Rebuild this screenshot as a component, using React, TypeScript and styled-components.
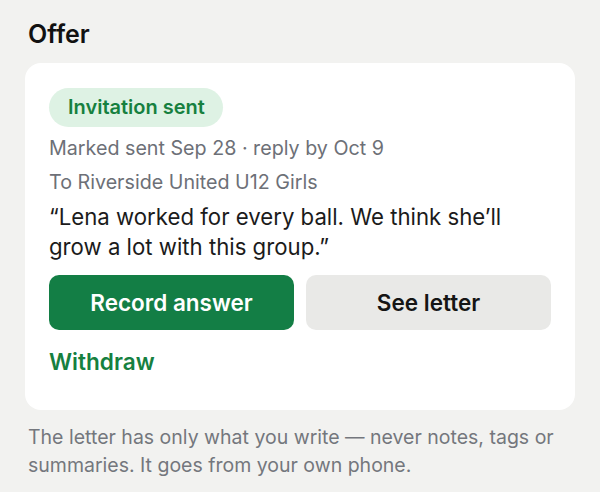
import React from 'react';
import styled, { createGlobalStyle } from 'styled-components';

const GlobalStyle = createGlobalStyle`
  html, body {
    margin: 0;
    padding: 0;
    background: #f2f2f0;
  }
  body {
    font-family: Inter, "Noto Sans", "Liberation Sans", sans-serif;
    -webkit-font-smoothing: antialiased;
  }
`;

const Page = styled.div`
  padding: 19px 25px 20px 25px;
`;

const Heading = styled.h2`
  margin: 0 0 14px 3px;
  font-size: 25px;
  line-height: 30px;
  font-weight: 600;
  color: #111;
`;

const Card = styled.div`
  background: #fff;
  border-radius: 16px;
  padding: 25px 24px 35px;
  display: flex;
  flex-direction: column;
`;

const Badge = styled.span`
  align-self: flex-start;
  background: #def2e4;
  color: #16803f;
  font-size: 20px;
  font-weight: 600;
  line-height: 39px;
  padding: 0 18px 0 19px;
  border-radius: 20px;
`;

const Meta = styled.div`
  margin-top: 4px;
  color: #6d7077;
  font-size: 19.7px;
  line-height: 34px;
`;

const Quote = styled.p`
  margin: 3px 0 0;
  color: #1b1b1b;
  font-size: 22.2px;
  line-height: 30px;
  max-width: 475px;
`;

const Actions = styled.div`
  display: grid;
  grid-template-columns: 1fr 1fr;
  gap: 12px;
  margin-top: 13px;
`;

const Button = styled.button<{ $primary?: boolean }>`
  height: 55px;
  border: none;
  border-radius: 10px;
  font-family: inherit;
  font-size: 22.5px;
  font-weight: 600;
  cursor: pointer;
  background: ${p => (p.$primary ? '#137e45' : '#e9e9e7')};
  color: ${p => (p.$primary ? '#fff' : '#151515')};
`;

const LinkButton = styled.button`
  align-self: flex-start;
  margin-top: 19px;
  padding: 0;
  border: none;
  background: none;
  font-family: inherit;
  font-size: 22.6px;
  font-weight: 600;
  line-height: 26px;
  color: #16803f;
  cursor: pointer;
`;

const Note = styled.p`
  margin: 13px 0 0 3px;
  color: #74777d;
  font-size: 19.5px;
  line-height: 28px;
  max-width: 545px;
`;

export default function App() {
  return (
    <>
      <GlobalStyle />
      <Page>
        <Heading>Offer</Heading>
        <Card>
          <Badge>Invitation sent</Badge>
          <Meta>
            Marked sent Sep 28 · reply by Oct 9
            <br />
            To Riverside United U12 Girls
          </Meta>
          <Quote>“Lena worked for every ball. We think she’ll grow a lot with this group.”</Quote>
          <Actions>
            <Button $primary>Record answer</Button>
            <Button>See letter</Button>
          </Actions>
          <LinkButton>Withdraw</LinkButton>
        </Card>
        <Note>The letter has only what you write — never notes, tags or summaries. It goes from your own phone.</Note>
      </Page>
    </>
  );
}
